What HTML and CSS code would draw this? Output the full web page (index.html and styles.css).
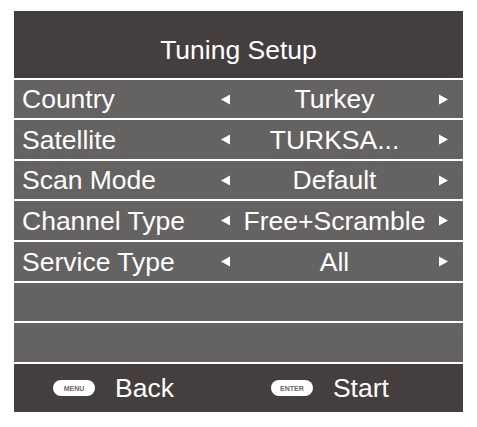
FILE: index.html
```html
<!DOCTYPE html>
<html>
<head>
<meta charset="utf-8">
<link rel="stylesheet" href="styles.css">
</head>
<body>
<div class="panel">
  <div class="header">Tuning Setup</div>
  <div class="row r1">
    <span class="label">Country</span>
    <svg class="arrow" viewBox="0 0 9 10"><polygon points="9,0 9,10 0,5" fill="#fff"/></svg>
    <span class="value">Turkey</span>
    <svg class="arrow" viewBox="0 0 9 10"><polygon points="0,0 0,10 9,5" fill="#fff"/></svg>
  </div>
  <div class="row r2">
    <span class="label">Satellite</span>
    <svg class="arrow" viewBox="0 0 9 10"><polygon points="9,0 9,10 0,5" fill="#fff"/></svg>
    <span class="value">TURKSA...</span>
    <svg class="arrow" viewBox="0 0 9 10"><polygon points="0,0 0,10 9,5" fill="#fff"/></svg>
  </div>
  <div class="row r3">
    <span class="label">Scan Mode</span>
    <svg class="arrow" viewBox="0 0 9 10"><polygon points="9,0 9,10 0,5" fill="#fff"/></svg>
    <span class="value">Default</span>
    <svg class="arrow" viewBox="0 0 9 10"><polygon points="0,0 0,10 9,5" fill="#fff"/></svg>
  </div>
  <div class="row r4">
    <span class="label">Channel Type</span>
    <svg class="arrow" viewBox="0 0 9 10"><polygon points="9,0 9,10 0,5" fill="#fff"/></svg>
    <span class="value">Free+Scramble</span>
    <svg class="arrow" viewBox="0 0 9 10"><polygon points="0,0 0,10 9,5" fill="#fff"/></svg>
  </div>
  <div class="row r5">
    <span class="label">Service Type</span>
    <svg class="arrow" viewBox="0 0 9 10"><polygon points="9,0 9,10 0,5" fill="#fff"/></svg>
    <span class="value">All</span>
    <svg class="arrow" viewBox="0 0 9 10"><polygon points="0,0 0,10 9,5" fill="#fff"/></svg>
  </div>
  <div class="row r6"></div>
  <div class="row r7"></div>
  <div class="footer">
    <div class="hint">
      <span class="pill">MENU</span>
      <span class="hint-text">Back</span>
    </div>
    <div class="hint">
      <span class="pill">ENTER</span>
      <span class="hint-text">Start</span>
    </div>
  </div>
</div>
</body>
</html>
```

FILE: styles.css
```css
html, body {
  margin: 0;
  padding: 0;
  background: #ffffff;
}

body {
  font-family: "Liberation Sans", Arial, sans-serif;
  color: #ffffff;
}

.panel {
  margin: 11px 0 0 14px;
  width: 449px;
  display: flex;
  flex-direction: column;
  gap: 2px;
}

.header {
  height: 67px;
  background: #443e3e;
  font-size: 26.5px;
  text-align: center;
  box-sizing: border-box;
  padding-top: 24px;
  line-height: 30px;
}

.row {
  background: #656262;
  display: flex;
  align-items: center;
  font-size: 26.5px;
  line-height: 30px;
  padding: 0 15px 0 8px;
}

.r1, .r3, .r6 { height: 38px; }
.r2, .r4, .r5, .r7 { height: 39px; }

.label {
  flex: 1;
}

.arrow {
  width: 9px;
  height: 11px;
  flex: none;
}

.value {
  width: 209px;
  text-align: center;
  white-space: nowrap;
}

.footer {
  height: 48px;
  background: #443e3e;
  display: flex;
  align-items: center;
}

.hint {
  display: flex;
  align-items: center;
}

.hint:first-child {
  margin-left: 39px;
}

.hint:last-child {
  margin-left: 97px;
}

.pill {
  width: 42px;
  height: 16px;
  border-radius: 8px;
  background: #ffffff;
  color: #6a6565;
  font-size: 7px;
  font-weight: bold;
  display: flex;
  align-items: center;
  justify-content: center;
  margin-right: 20px;
}

.hint-text {
  font-size: 26.5px;
  line-height: 30px;
}
```
